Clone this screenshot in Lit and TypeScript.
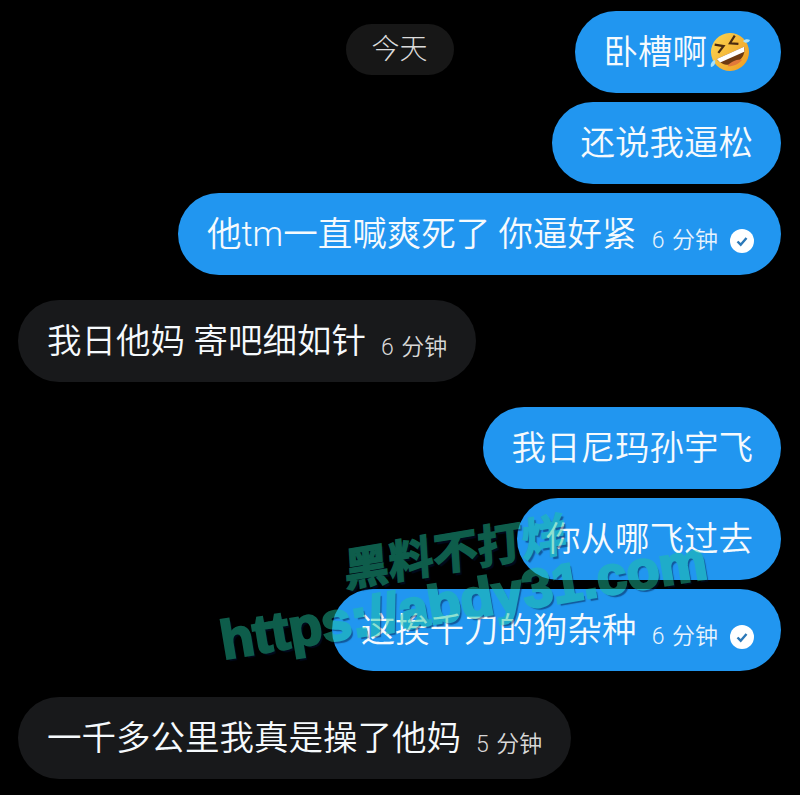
import { LitElement, html, css, nothing } from 'lit';
import { customElement } from 'lit/decorators.js';

interface Msg {
  text: string;
  mine: boolean;
  time?: string;
  read?: boolean;
  top: number;
}

const MESSAGES: Msg[] = [
  { text: '还说我逼松', mine: true, top: 9 },
  { text: '他tm一直喊爽死了 你逼好紧', mine: true, time: '6 分钟', read: true, top: 9 },
  { text: '我日他妈 寄吧细如针', mine: false, time: '6 分钟', top: 25 },
  { text: '我日尼玛孙宇飞', mine: true, top: 25 },
  { text: '你从哪飞过去', mine: true, top: 9 },
  { text: '这挨千刀的狗杂种', mine: true, time: '6 分钟', read: true, top: 9 },
  { text: '一千多公里我真是操了他妈', mine: false, time: '5 分钟', top: 26 },
];

@customElement('app-root')
export class AppRoot extends LitElement {
  static styles = css`
    :host {
      display: block;
      position: relative;
      width: 800px;
      height: 795px;
      overflow: hidden;
      background: #000;
      color: #f6fafd;
      font-family: Roboto, "Noto Sans CJK SC", sans-serif;
      font-weight: 350;
    }

    .list {
      display: flex;
      flex-direction: column;
      padding: 11px 19px 0 18px;
    }

    .first {
      display: grid;
      grid-template-columns: 1fr auto 1fr;
      margin-right: -19px;
      padding-right: 19px;
    }

    .day {
      grid-column: 2;
      align-self: start;
      margin-top: 13px;
      width: 108px;
      height: 51px;
      border-radius: 26px;
      background: #171717;
      color: #dcdcdc;
      font-size: 28px;
      font-weight: 300;
      line-height: 51px;
      text-align: center;
    }

    .first .bubble {
      grid-column: 3;
      justify-self: end;
      padding: 0 31px 0 29px;
    }

    .bubble {
      display: flex;
      align-items: center;
      box-sizing: border-box;
      height: 82px;
      padding: 0 27px 0 29px;
      border-radius: 41px;
      font-size: 34.5px;
      line-height: 78px;
      white-space: nowrap;
    }

    .mine {
      align-self: flex-end;
      background: #2196f0;
    }

    .mine.plain {
      padding-right: 28px;
    }

    .theirs {
      align-self: flex-start;
      background: #18191b;
      padding-right: 29px;
    }

    .meta {
      display: flex;
      align-items: center;
      margin-left: 15px;
      margin-top: 14px;
      font-size: 23px;
      word-spacing: 2px;
      color: #e8f3fd;
    }

    .theirs .meta {
      color: #d8d8d8;
    }

    .check {
      display: block;
      margin-left: 12px;
      width: 24px;
      height: 24px;
    }

    .emoji {
      display: block;
      margin-left: 3px;
      width: 40px;
      height: 40px;
    }

    /* watermark lying over the chat */
    .mark {
      position: absolute;
      white-space: nowrap;
      color: #1ec69f;
      opacity: 0.47;
      font-weight: 700;
      text-shadow: 2px 3px 1px #00143c;
      transform-origin: left bottom;
      pointer-events: none;
    }

    .mark-cn {
      left: 346px;
      top: 538px;
      font-family: "Noto Sans CJK SC", sans-serif;
      font-size: 45px;
      line-height: 60px;
      -webkit-text-stroke: 1.500px #1ec69f;
      transform: rotate(-9.5deg) skewX(-6deg);
    }

    .mark-url {
      left: 226px;
      top: 607px;
      font-family: "Liberation Sans", sans-serif;
      font-size: 54px;
      line-height: 66px;
      -webkit-text-stroke: 2.500px #1ec69f;
      transform: rotate(-9.5deg);
    }
  `;

  private emoji() {
    return html`<svg class="emoji" viewBox="0 0 40 40">
      <defs>
        <linearGradient id="face" x1="0.2" y1="0" x2="0.8" y2="1">
          <stop offset="0" stop-color="#fbd24e" />
          <stop offset="1" stop-color="#ef9f25" />
        </linearGradient>
      </defs>
      <g transform="rotate(-24 20 20)">
        <circle cx="20" cy="20" r="19" fill="url(#face)" />
        <path d="M5 21c3 15 27 15 30 0z" fill="#6e3a12" />
        <path d="M5 21h30l-1.800 4.500H6.800z" fill="#fff" />
        <path d="M12 32c4 2.500 12 2.500 16 0-4-3-12-3-16 0z" fill="#e2793a" />
        <path d="M9 7l7.500 5-7.500 4M31 7l-7.500 5 7.500 4" fill="none" stroke="#4a2a10" stroke-width="2.200" />
      </g>
      <path d="M33 9c2-2 5-2 7-1-1 3-5 4-7 1zM5 28c-3 1-5 4-4 7 3 0 5-4 4-7z" fill="#a8e2fa" />
    </svg>`;
  }

  private check() {
    return html`<svg class="check" viewBox="0 0 24 24">
      <circle cx="12" cy="12" r="12" fill="#fff" />
      <path d="M7.500 12.500l3.200 3.200 5.800-6.700" fill="none" stroke="#2b78b8" stroke-width="2.400" />
    </svg>`;
  }

  private bubble(m: Msg) {
    const side = m.mine ? 'mine' : 'theirs';
    return html`<div class="bubble ${side} ${m.time ? '' : 'plain'}" style="margin-top: ${m.top}px">
      <span>${m.text}</span>
      ${m.time
        ? html`<span class="meta">${m.time}${m.read ? this.check() : nothing}</span>`
        : nothing}
    </div>`;
  }

  render() {
    return html`
      <div class="list">
        <div class="first">
          <div class="day">今天</div>
          <div class="bubble mine"><span>卧槽啊</span>${this.emoji()}</div>
        </div>
        ${MESSAGES.map((m) => this.bubble(m))}
      </div>
      <div class="mark mark-cn">黑料不打烊</div>
      <div class="mark mark-url">https://abdy31.com</div>
    `;
  }
}
